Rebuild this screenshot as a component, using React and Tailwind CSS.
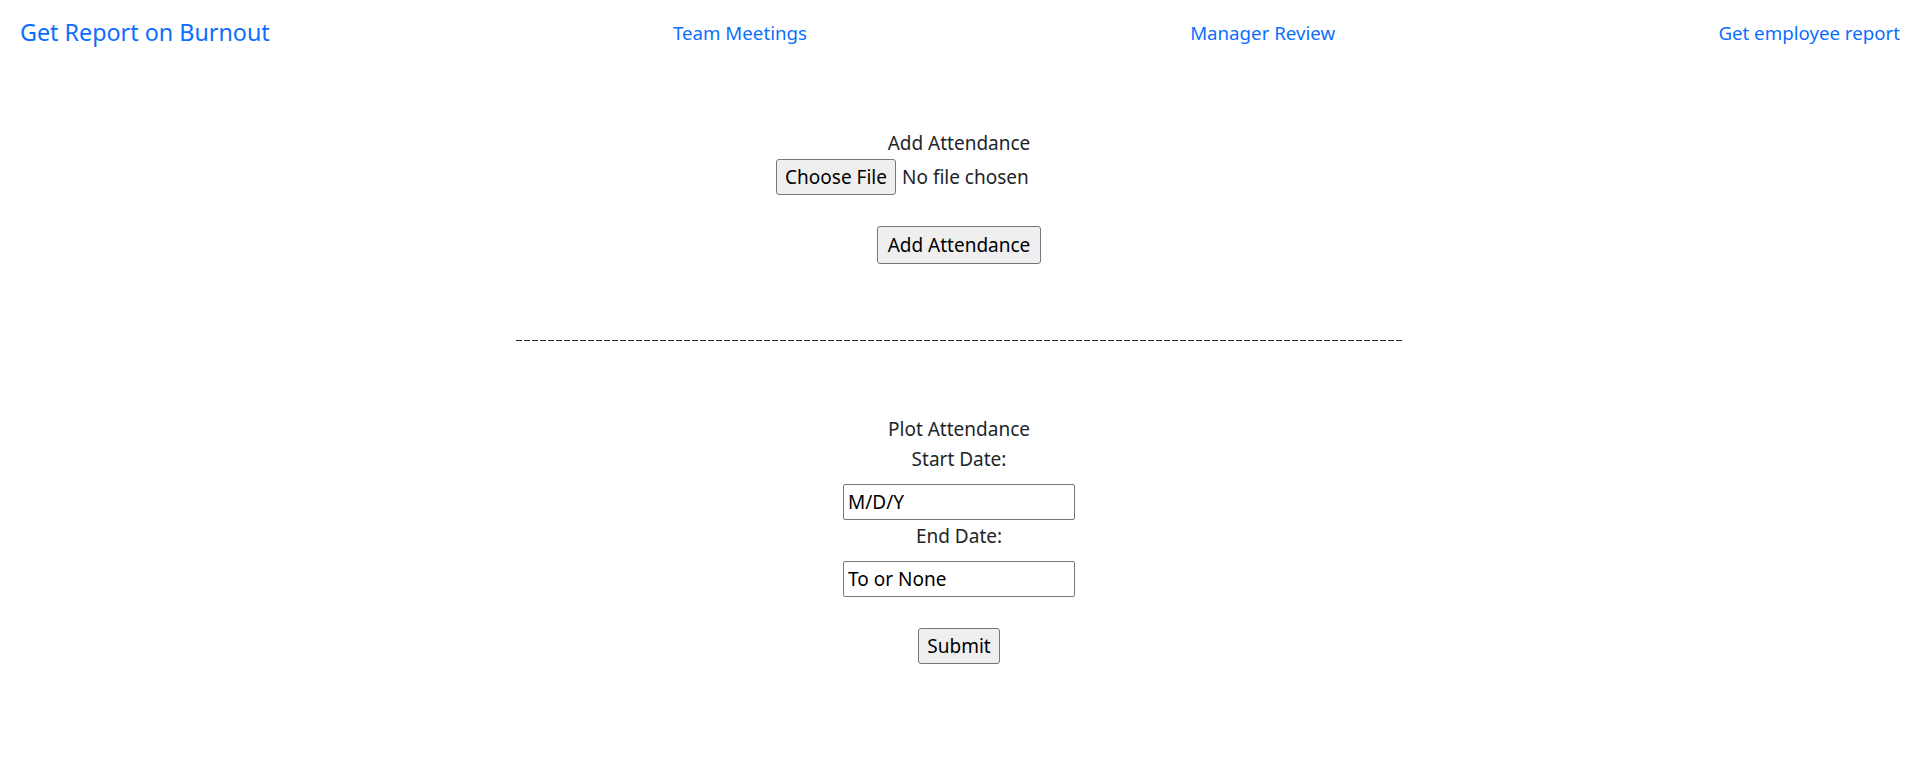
import React from 'react';

const font = { fontFamily: '"Noto Sans", "Open Sans", sans-serif' };

const Navbar = () => (
  <nav className="flex items-center justify-between h-[66px] pl-5 pr-[18px]">
    <a href="#" className="text-[23.3px] text-[#0d6efd] mr-5 leading-none">Get Report on Burnout</a>
    <a href="#" className="text-[18.7px] text-[#0d6efd] leading-none">Team Meetings</a>
    <a href="#" className="text-[18.7px] text-[#0d6efd] leading-none">Manager Review</a>
    <a href="#" className="text-[18.7px] text-[#0d6efd] leading-none">Get employee report</a>
  </nav>
);

const Label = ({ children }) => (
  <div className="h-[29px] leading-[29px] text-[19px] text-[#212529]">{children}</div>
);

const Button = ({ children, width }) => (
  <button className={`${width} h-full bg-[#efefef] border border-[#767676] rounded-[3px] text-[19px] text-black leading-none`}>
    {children}
  </button>
);

const TextBox = ({ value }) => (
  <input
    type="text"
    defaultValue={value}
    className="w-[232px] h-[36px] border border-[#767676] rounded-[2px] px-[4px] text-[19px] text-black outline-none"
  />
);

export default function App() {
  return (
    <div className="min-h-screen bg-white" style={font}>
      <Navbar />

      <main className="flex flex-col items-center">
        {/* upload section */}
        <div className="mt-[63px]">
          <Label>Add Attendance</Label>
        </div>
        <div className="w-[366px] h-[36px] mt-px flex items-center">
          <Button width="w-[120px]">Choose File</Button>
          <span className="ml-[6px] text-[19px] text-[#212529]">No file chosen</span>
        </div>
        <div className="h-[38px] mt-[31px]">
          <Button width="w-[164px]">Add Attendance</Button>
        </div>

        <div className="w-[886px] h-px mt-[76px] bg-[repeating-linear-gradient(90deg,#212529_0px,#212529_6px,transparent_6px,transparent_8px)]" />

        {/* plot section */}
        <div className="mt-[74px]">
          <Label>Plot Attendance</Label>
        </div>
        <div className="mt-px">
          <Label>Start Date:</Label>
        </div>
        <div className="mt-[10px]">
          <TextBox value="M/D/Y" />
        </div>
        <div className="mt-[2px]">
          <Label>End Date:</Label>
        </div>
        <div className="mt-[10px]">
          <TextBox value="To or None" />
        </div>
        <div className="h-[36px] mt-[31px]">
          <Button width="w-[82px]">Submit</Button>
        </div>
      </main>
    </div>
  );
}
